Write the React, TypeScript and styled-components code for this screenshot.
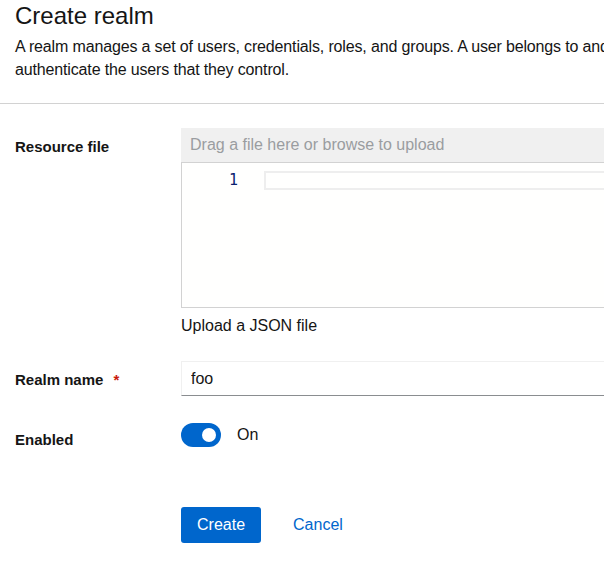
import styled, { createGlobalStyle } from "styled-components";
import { useState } from "react";

const GlobalStyle = createGlobalStyle`
  body {
    margin: 0;
    overflow: hidden;
    background: #ffffff;
    color: #151515;
    font-family: "Liberation Sans", Arial, sans-serif;
  }
`;

export default function App() {
  const [enabled, setEnabled] = useState<boolean>(true);
  const [name, setName] = useState<string>("foo");

  return (
    <Page>
      <GlobalStyle />
      <Header>
        <Title>Create realm</Title>
        <Description>
          A realm manages a set of users, credentials, roles, and groups. A user
          belongs to and logs into a realm. Realms are isolated from one another
          and can only manage and
          <br />
          authenticate the users that they control.
        </Description>
      </Header>
      <Form>
        <Label>Resource file</Label>
        <Control>
          <DropZone>Drag a file here or browse to upload</DropZone>
          <Editor>
            <Gutter>1</Gutter>
            <CurrentLine />
          </Editor>
          <Helper>Upload a JSON file</Helper>
        </Control>

        <Label>
          Realm name <Required>*</Required>
        </Label>
        <Control>
          <TextInput value={name} onChange={(e) => setName(e.target.value)} />
        </Control>

        <Label $top={10}>Enabled</Label>
        <SwitchRow onClick={() => setEnabled(!enabled)}>
          <Toggle $on={enabled}>
            <Knob $on={enabled} />
          </Toggle>
          <SwitchText>{enabled ? "On" : "Off"}</SwitchText>
        </SwitchRow>

        <Spacer />
        <Actions>
          <PrimaryButton>Create</PrimaryButton>
          <LinkButton>Cancel</LinkButton>
        </Actions>
      </Form>
    </Page>
  );
}

const Page = styled.div`
  width: 900px;
`;

const Header = styled.section`
  padding: 0 15px 22px;
  border-bottom: 1px solid #d2d2d2;
`;

const Title = styled.h1`
  margin: 0;
  font-size: 24px;
  line-height: 31px;
  font-weight: 400;
`;

const Description = styled.p`
  margin: 4px 0 0;
  font-size: 16px;
  line-height: 23px;
  letter-spacing: -0.15px;
  white-space: nowrap;
`;

const Form = styled.form`
  display: grid;
  grid-template-columns: 150px 1fr;
  column-gap: 16px;
  row-gap: 24px;
  padding: 24px 0 0 15px;
  align-items: start;
`;

const Label = styled.div<{ $top?: number }>`
  padding-top: ${(p) => p.$top ?? 9}px;
  font-size: 15px;
  line-height: 19px;
  font-weight: 700;
`;

const Required = styled.span`
  color: #c9190b;
  margin-left: 6px;
`;

const Control = styled.div`
  display: flex;
  flex-direction: column;
`;

const DropZone = styled.div`
  height: 34px;
  display: flex;
  align-items: center;
  padding-left: 9px;
  background: #f0f0f0;
  border-bottom: 1px solid #d2d2d2;
  color: #9a9da0;
  font-size: 16px;
`;

const Editor = styled.div`
  height: 136px;
  display: flex;
  align-items: flex-start;
  padding-top: 8px;
  background: #fffffe;
  border-left: 1px solid #d2d2d2;
  border-bottom: 1px solid #d2d2d2;
`;

const Gutter = styled.div`
  width: 56px;
  text-align: right;
  font-family: "DejaVu Sans Mono", "Liberation Mono", monospace;
  font-size: 15px;
  line-height: 19px;
  color: #0b216f;
`;

const CurrentLine = styled.div`
  flex: 1;
  height: 15px;
  margin-left: 26px;
  border: 2px solid #eeeeee;
`;

const Helper = styled.div`
  margin-top: 6px;
  font-size: 16px;
  line-height: 23px;
`;

const TextInput = styled.input`
  height: 35px;
  box-sizing: border-box;
  padding: 0 9px;
  border: 1px solid #f0f0f0;
  border-bottom-color: #8a8d90;
  font-family: inherit;
  font-size: 16px;
  color: #151515;
  outline: none;
`;

const SwitchRow = styled.div`
  display: flex;
  align-items: center;
  gap: 16px;
  padding-top: 3px;
  cursor: pointer;
`;

const Toggle = styled.div<{ $on: boolean }>`
  width: 40px;
  height: 24px;
  border-radius: 12px;
  background: ${(p) => (p.$on ? "#0066cc" : "#8a8d90")};
  display: flex;
  align-items: center;
  justify-content: ${(p) => (p.$on ? "flex-end" : "flex-start")};
  padding: 0 5px;
  box-sizing: border-box;
`;

const Knob = styled.span<{ $on: boolean }>`
  width: 14px;
  height: 14px;
  border-radius: 50%;
  background: #ffffff;
`;

const SwitchText = styled.span`
  font-size: 16px;
  line-height: 24px;
`;

const Spacer = styled.div``;

const Actions = styled.div`
  display: flex;
  gap: 16px;
  margin-top: 34px;
`;

const PrimaryButton = styled.button`
  height: 36px;
  padding: 0 16px;
  border: none;
  border-radius: 3px;
  background: #0066cc;
  color: #ffffff;
  font-family: inherit;
  font-size: 16px;
`;

const LinkButton = styled.button`
  height: 36px;
  padding: 0 16px;
  border: none;
  background: transparent;
  color: #0066cc;
  font-family: inherit;
  font-size: 16px;
`;
